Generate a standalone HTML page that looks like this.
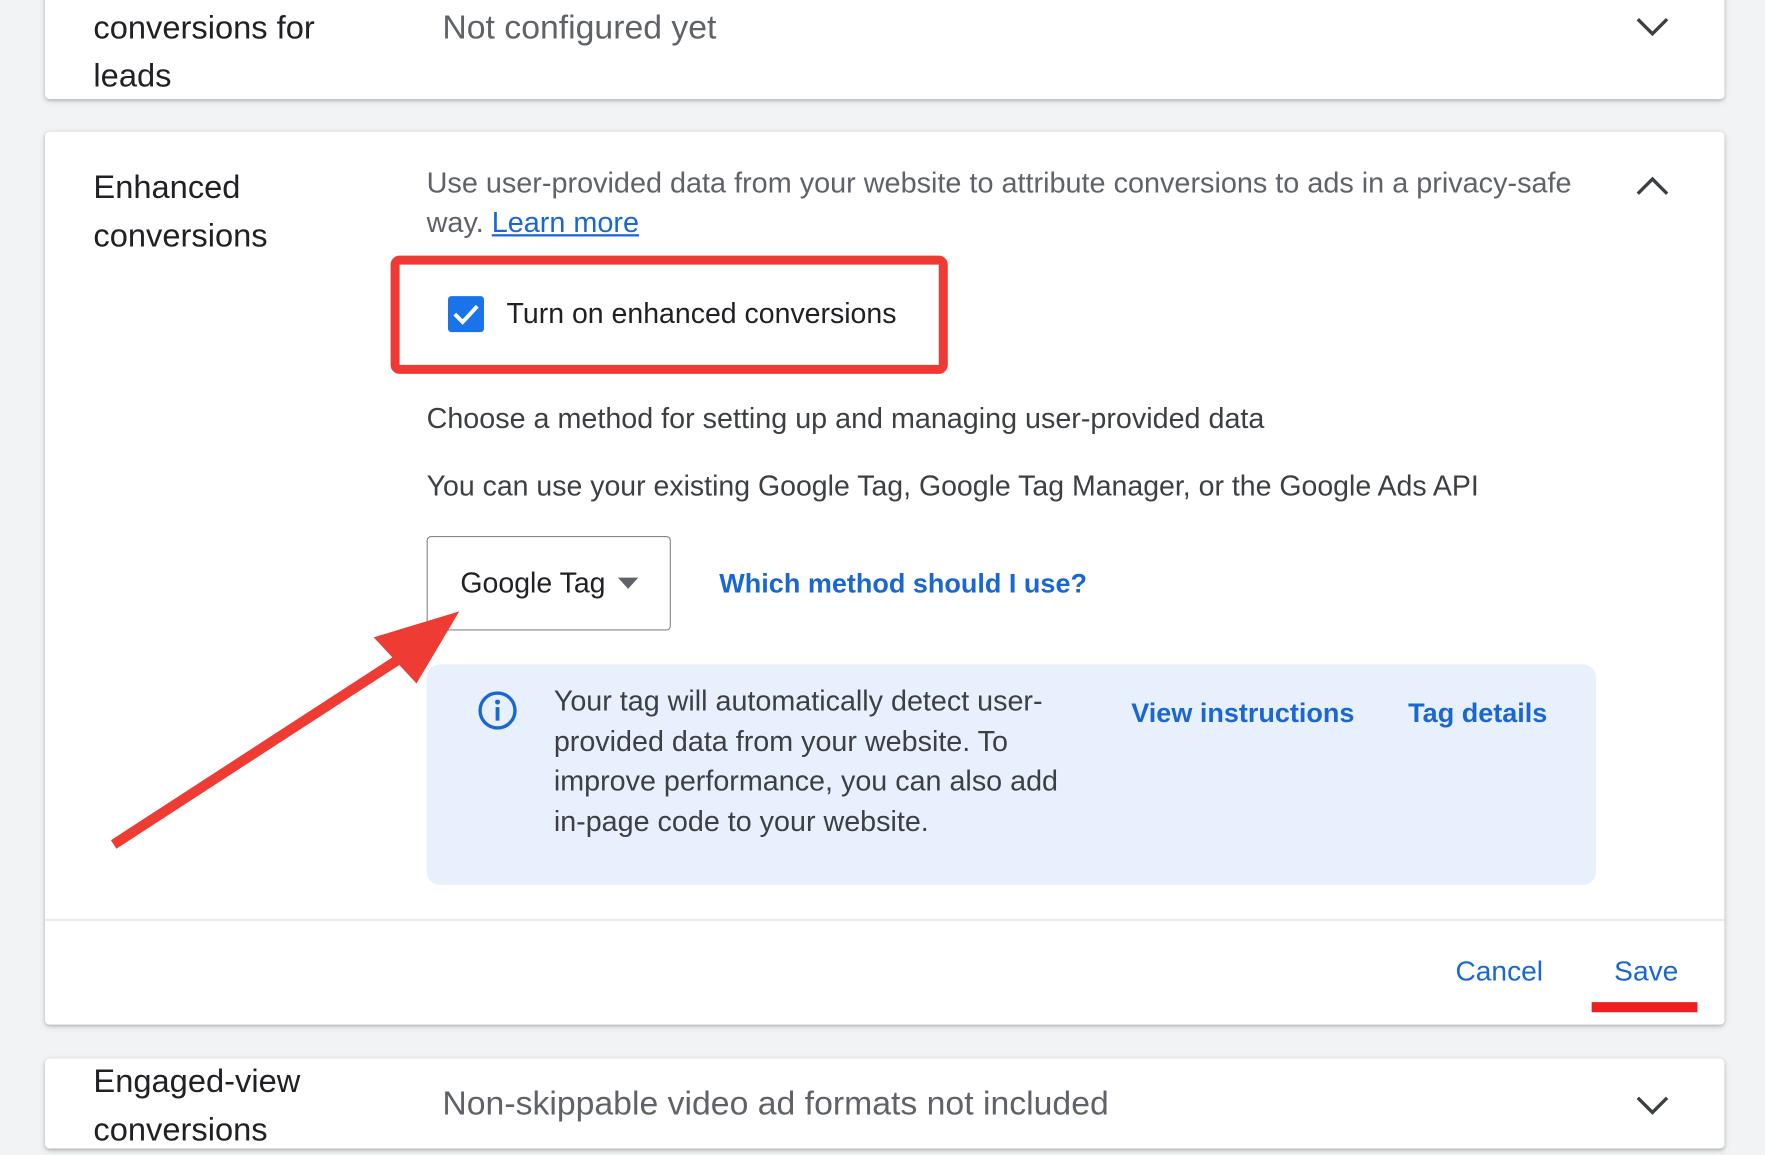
<!DOCTYPE html>
<html><head><meta charset="utf-8"><style>
html,body{margin:0;padding:0;}
body{width:1765px;height:1126px;overflow:hidden;background:#f1f3f4;font-family:"Liberation Sans",Arial,sans-serif;}
#w{position:absolute;left:0;top:0;width:1568px;height:1000px;transform:scale(1.12564,1.126);transform-origin:0 0;}
.card{position:absolute;left:40px;width:1492px;background:#fff;box-shadow:0 1px 3px rgba(60,64,67,.3),0 2px 6px rgba(60,64,67,.12);border-radius:4px;}
.t{position:absolute;white-space:nowrap;color:#3c4043;font-size:25.3px;}
.lbl{color:#202124;font-size:29px;}
.lnk{color:#1967d2;font-weight:bold;font-size:24px;}
.chev{position:absolute;}
</style></head><body><div id="w">
<div class="card" style="top:-10px;height:98px;"></div>
<div class="t lbl" style="left:83px;top:4px;line-height:43px;">conversions for<br>leads</div>
<div class="t" style="left:393px;top:8px;font-size:30px;color:#5f6368;">Not configured yet</div>
<svg class="chev" style="left:1452px;top:14px" width="32" height="20"><path d="M3 3 L16 16 L29 3" fill="none" stroke="#3c4043" stroke-width="3"/></svg>

<div class="card" style="top:117px;height:793px;"></div>
<div style="position:absolute;left:40px;top:816px;width:1492px;height:2px;background:#e8eaed"></div>
<div class="t lbl" style="left:83px;top:146px;line-height:43px;">Enhanced<br>conversions</div>
<div class="t" style="left:379px;top:146px;line-height:35px;font-size:25.6px;color:#5f6368;">Use user-provided data from your website to attribute conversions to ads in a privacy-safe<br>way. <span style="color:#1967d2;text-decoration:underline">Learn more</span></div>
<svg class="chev" style="left:1452px;top:155px" width="32" height="20"><path d="M3 17 L16 4 L29 17" fill="none" stroke="#3c4043" stroke-width="3"/></svg>

<div style="position:absolute;left:347px;top:227px;width:479px;height:89px;border:8px solid #ef3a33;border-radius:8px;"></div>
<div style="position:absolute;left:398px;top:263px;width:32px;height:32px;background:#1a73e8;border-radius:3px;"></div>
<svg style="position:absolute;left:398px;top:263px" width="32" height="32"><path d="M6 16 L13 23 L26 9" fill="none" stroke="#fff" stroke-width="3.5"/></svg>
<div class="t" style="left:450px;top:265px;color:#202124;">Turn on enhanced conversions</div>

<div class="t" style="left:379px;top:358px;font-size:25.5px;">Choose a method for setting up and managing user-provided data</div>
<div class="t" style="left:379px;top:418px;">You can use your existing Google Tag, Google Tag Manager, or the Google Ads API</div>

<div style="position:absolute;left:379px;top:476px;width:215px;height:82px;border:1.5px solid #80868b;border-radius:4px;background:#fff"></div>
<div class="t" style="left:409px;top:504px;color:#202124;">Google Tag</div>
<svg style="position:absolute;left:548px;top:512px" width="20" height="12"><path d="M1 1 L19 1 L10 11Z" fill="#5f6368"/></svg>
<div class="t lnk" style="left:639px;top:505px;">Which method should I use?</div>

<div style="position:absolute;left:379px;top:590px;width:1039px;height:196px;background:#e8f0fe;border-radius:12px;"></div>
<svg style="position:absolute;left:424px;top:613px" width="36" height="36"><circle cx="18" cy="18" r="15.5" fill="none" stroke="#1967d2" stroke-width="3"/><circle cx="18" cy="10.5" r="2.2" fill="#1967d2"/><rect x="16.3" y="15" width="3.4" height="12" fill="#1967d2"/></svg>
<div class="t" style="left:492px;top:606px;line-height:35.5px;font-size:25.5px;">Your tag will automatically detect user-<br>provided data from your website. To<br>improve performance, you can also add<br>in-page code to your website.</div>
<div class="t lnk" style="left:1005px;top:620px;">View instructions</div>
<div class="t lnk" style="left:1251px;top:620px;">Tag details</div>

<div class="t lnk" style="left:1293px;top:849px;font-weight:normal;font-size:25px;">Cancel</div>
<div class="t lnk" style="left:1434px;top:849px;font-weight:normal;font-size:25px;">Save</div>
<div style="position:absolute;left:1414px;top:890px;width:94px;height:9px;background:#ef1f1f"></div>

<svg style="position:absolute;left:0;top:0" width="1568" height="1000"><line x1="101" y1="750" x2="355" y2="585" stroke="#ee3b33" stroke-width="9"/><path d="M332 566 L408 543 L370 607Z" fill="#ee3b33"/></svg>

<div class="card" style="top:940px;height:80px;"></div>
<div class="t lbl" style="left:83px;top:940px;line-height:43px;">Engaged-view<br>conversions</div>
<div class="t" style="left:393px;top:964px;font-size:30px;color:#5f6368;">Non-skippable video ad formats not included</div>
<svg class="chev" style="left:1452px;top:972px" width="32" height="20"><path d="M3 3 L16 16 L29 3" fill="none" stroke="#3c4043" stroke-width="3"/></svg>
</div></body></html>
